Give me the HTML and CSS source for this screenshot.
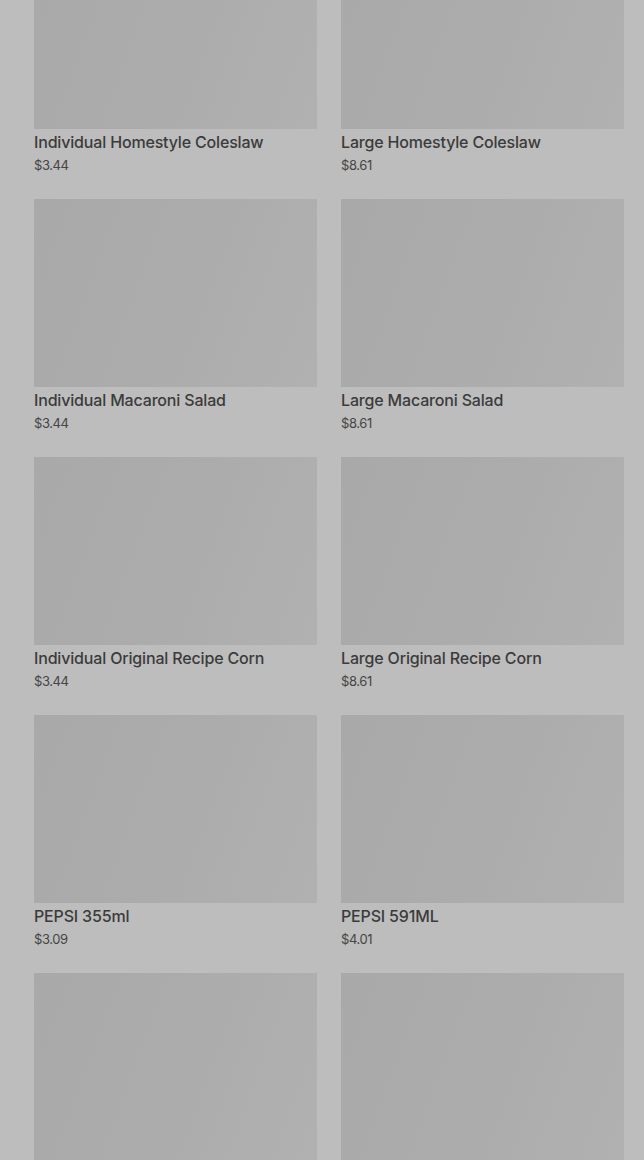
FILE: index.html
```html
<!DOCTYPE html>
<html lang="en">
<head>
  <meta charset="UTF-8">
  <meta name="viewport" content="width=device-width, initial-scale=1.0">
  <title>Menu</title>
  <link rel="stylesheet" href="styles.css">
</head>
<body>
  <main id="menu">
    <ul class="item-grid">
      <li class="item">
        <div class="item-img"></div>
        <h3>Individual Homestyle Coleslaw</h3>
        <span class="price">$3.44</span>
      </li>
      <li class="item">
        <div class="item-img"></div>
        <h3>Large Homestyle Coleslaw</h3>
        <span class="price">$8.61</span>
      </li>
      <li class="item">
        <div class="item-img"></div>
        <h3>Individual Macaroni Salad</h3>
        <span class="price">$3.44</span>
      </li>
      <li class="item">
        <div class="item-img"></div>
        <h3>Large Macaroni Salad</h3>
        <span class="price">$8.61</span>
      </li>
      <li class="item">
        <div class="item-img"></div>
        <h3>Individual Original Recipe Corn</h3>
        <span class="price">$3.44</span>
      </li>
      <li class="item">
        <div class="item-img"></div>
        <h3>Large Original Recipe Corn</h3>
        <span class="price">$8.61</span>
      </li>
      <li class="item">
        <div class="item-img"></div>
        <h3>PEPSI 355ml</h3>
        <span class="price">$3.09</span>
      </li>
      <li class="item">
        <div class="item-img"></div>
        <h3>PEPSI 591ML</h3>
        <span class="price">$4.01</span>
      </li>
      <li class="item">
        <div class="item-img"></div>
      </li>
      <li class="item">
        <div class="item-img"></div>
      </li>
    </ul>
  </main>
</body>
</html>
```
FILE: styles.css
```css
html, body {
  margin: 0;
  padding: 0;
  background-color: #bdbdbd;
  overflow: hidden;
}
body {
  font-family: Inter, "Noto Sans", Arial, sans-serif;
  color: #3d3d3d;
}
#menu {
  padding: 0 20px 0 34px;
}
.item-grid {
  list-style: none;
  margin: -59px 0 0 0;
  padding: 0;
  display: grid;
  grid-template-columns: 1fr 1fr;
  column-gap: 24px;
  row-gap: 25px;
}
.item {
  display: flex;
  flex-direction: column;
}
.item-img {
  height: 188px;
  background: linear-gradient(110deg, #a9a9a9 0%, #acacac 55%, #b1b1b1 100%);
}
.item h3 {
  margin: 3px 0 0 0;
  font-size: 16px;
  font-weight: 500;
  line-height: 20px;
  letter-spacing: -0.17px;
  color: #3b3b3b;
}
.price {
  margin-top: 4px;
  font-size: 13px;
  line-height: 18px;
  letter-spacing: -0.4px;
  color: #454545;
}
```
